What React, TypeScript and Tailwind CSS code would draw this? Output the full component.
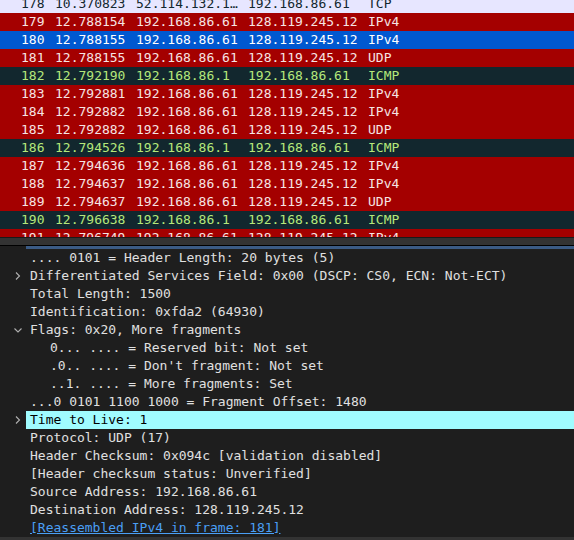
const packets: any[] = [
  { no: "178", time: "10.370823", src: "52.114.132.1…", dst: "192.168.86.61", proto: "TCP", kind: "tcp" },
  { no: "179", time: "12.788154", src: "192.168.86.61", dst: "128.119.245.12", proto: "IPv4", kind: "bad" },
  { no: "180", time: "12.788155", src: "192.168.86.61", dst: "128.119.245.12", proto: "IPv4", kind: "sel" },
  { no: "181", time: "12.788155", src: "192.168.86.61", dst: "128.119.245.12", proto: "UDP", kind: "bad" },
  { no: "182", time: "12.792190", src: "192.168.86.1", dst: "192.168.86.61", proto: "ICMP", kind: "icmp" },
  { no: "183", time: "12.792881", src: "192.168.86.61", dst: "128.119.245.12", proto: "IPv4", kind: "bad" },
  { no: "184", time: "12.792882", src: "192.168.86.61", dst: "128.119.245.12", proto: "IPv4", kind: "bad" },
  { no: "185", time: "12.792882", src: "192.168.86.61", dst: "128.119.245.12", proto: "UDP", kind: "bad" },
  { no: "186", time: "12.794526", src: "192.168.86.1", dst: "192.168.86.61", proto: "ICMP", kind: "icmp" },
  { no: "187", time: "12.794636", src: "192.168.86.61", dst: "128.119.245.12", proto: "IPv4", kind: "bad" },
  { no: "188", time: "12.794637", src: "192.168.86.61", dst: "128.119.245.12", proto: "IPv4", kind: "bad" },
  { no: "189", time: "12.794637", src: "192.168.86.61", dst: "128.119.245.12", proto: "UDP", kind: "bad" },
  { no: "190", time: "12.796638", src: "192.168.86.1", dst: "192.168.86.61", proto: "ICMP", kind: "icmp" },
  { no: "191", time: "12.796749", src: "192.168.86.61", dst: "128.119.245.12", proto: "IPv4", kind: "bad" },
];

const rowStyle: Record<string, string> = {
  tcp: "bg-[#e7e6ff] text-[#12272e]",
  bad: "bg-[#a40000] text-[#f6e4e4]",
  sel: "bg-[#0058d0] text-white",
  icmp: "bg-[#12272e] text-[#b5e77b]",
};

const details: any[] = [
  { text: ".... 0101 = Header Length: 20 bytes (5)", level: 0 },
  { text: "Differentiated Services Field: 0x00 (DSCP: CS0, ECN: Not-ECT)", level: 0, arrow: "right" },
  { text: "Total Length: 1500", level: 0 },
  { text: "Identification: 0xfda2 (64930)", level: 0 },
  { text: "Flags: 0x20, More fragments", level: 0, arrow: "down" },
  { text: "0... .... = Reserved bit: Not set", level: 1 },
  { text: ".0.. .... = Don't fragment: Not set", level: 1 },
  { text: "..1. .... = More fragments: Set", level: 1 },
  { text: "...0 0101 1100 1000 = Fragment Offset: 1480", level: 0 },
  { text: "Time to Live: 1", level: 0, arrow: "right", hl: true },
  { text: "Protocol: UDP (17)", level: 0 },
  { text: "Header Checksum: 0x094c [validation disabled]", level: 0 },
  { text: "[Header checksum status: Unverified]", level: 0 },
  { text: "Source Address: 192.168.86.61", level: 0 },
  { text: "Destination Address: 128.119.245.12", level: 0 },
  { text: "[Reassembled IPv4 in frame: 181]", level: 0, link: true },
];

function Chevron({ dir }: { dir: string }) {
  return (
    <svg width="10" height="10" viewBox="0 0 10 10" className="text-[#b0b0b0]">
      {dir === "right" ? (
        <path d="M3 1.5 L6.5 5 L3 8.5" fill="none" stroke="currentColor" strokeWidth="1.1" />
      ) : (
        <path d="M1.5 3.5 L5 7 L8.5 3.5" fill="none" stroke="currentColor" strokeWidth="1.1" />
      )}
    </svg>
  );
}

export default function App() {
  return (
    <div className="w-[574px] h-[540px] overflow-hidden bg-[#1e1e1e] flex flex-col font-['DejaVu_Sans_Mono','Liberation_Mono',monospace] text-[13px]">
      <div className="h-[237px] shrink-0 overflow-hidden">
        <div className="-mt-[5px]">
          {packets.map((p) => (
            <div key={p.no} className={`flex h-[18px] leading-[18px] pl-[21px] whitespace-nowrap ${rowStyle[p.kind]}`}>
              <span className="w-[34px]">{p.no}</span>
              <span className="w-[81px]">{p.time}</span>
              <span className="w-[112px]">{p.src}</span>
              <span className="w-[120px]">{p.dst}</span>
              <span className="flex-1">{p.proto}</span>
            </div>
          ))}
        </div>
      </div>
      <div className="h-[9px] shrink-0 bg-[#333333] border-t border-t-[#1a1a1a] border-b border-b-black" />
      <div className="h-[3px] shrink-0 ml-[26px] bg-[#3b5b85]" />
      <div className="flex-1 overflow-hidden text-[#e0e0e0]">
        {details.map((d, i) => (
          <div key={i} className="flex h-[18px] leading-[18px] whitespace-nowrap">
            <div className="w-[26px] shrink-0 flex items-center justify-start pl-[13px]">
              {d.arrow && <Chevron dir={d.arrow} />}
            </div>
            <div
              className={`flex-1 ${d.level === 1 ? "pl-[24px]" : "pl-[4px]"} ${d.hl ? "bg-[#a0fcff] text-black" : ""} ${d.link ? "text-[#4a9ff5]" : ""}`}
            >
              <span className={d.link ? "underline" : ""}>{d.text}</span>
            </div>
          </div>
        ))}
      </div>
      <div className="h-[3px] shrink-0 bg-[#333333]" />
    </div>
  );
}
